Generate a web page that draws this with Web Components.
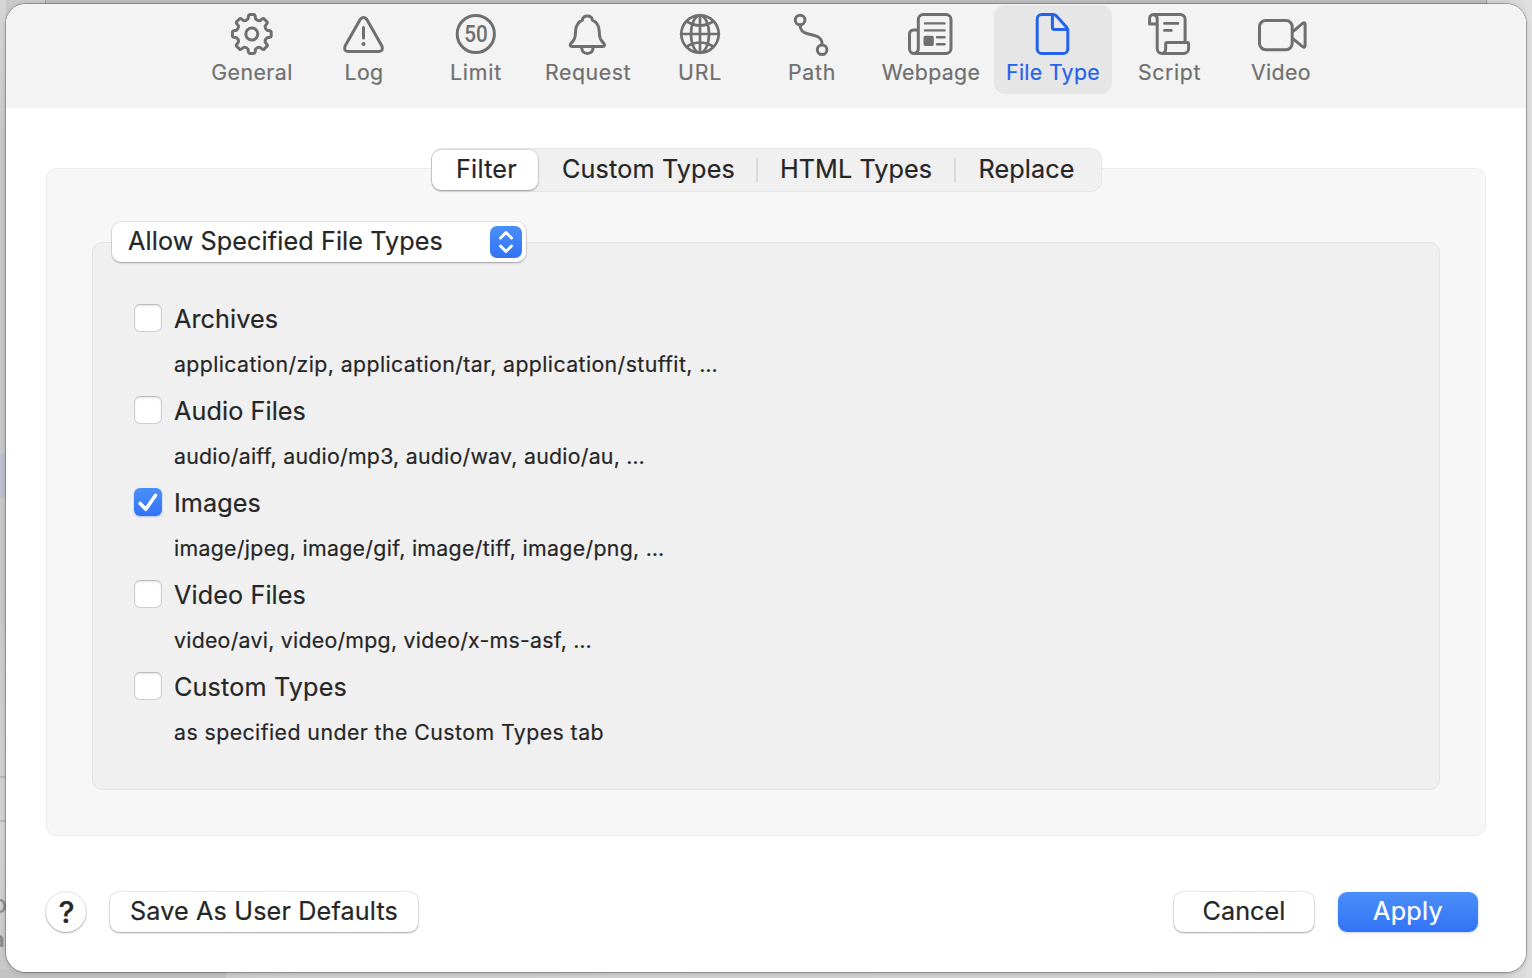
<!DOCTYPE html>
<html lang="en">
<head>
<meta charset="utf-8">
<title>File Type Settings</title>
<style>
html,body{margin:0;height:100%;overflow:hidden}
body{font-family:Inter,"Liberation Sans",sans-serif;color:#262626;font-size:25.2px;line-height:30px;-webkit-text-stroke:.2px}
</style>
</head>
<body>
<settings-window></settings-window>
<script>
const define = (name, html, setup) => {
  const tpl = document.createElement('template');
  tpl.innerHTML = html;
  customElements.define(name, class extends HTMLElement {
    constructor() { super(); this.attachShadow({mode: 'open'}).append(tpl.content.cloneNode(true)); }
    connectedCallback() { if (setup) setup.call(this, this.shadowRoot); }
  });
};

// Label whose tracking is adjusted so that it occupies a given width.
define('fit-label', `<style>:host{display:inline-block;white-space:pre}</style><span><slot></slot></span>`, function (root) {
  const span = root.querySelector('span');
  const target = parseFloat(this.getAttribute('width'));
  const n = [...this.textContent].length;
  const natural = span.getBoundingClientRect().width;
  span.style.letterSpacing = ((target - natural) / n).toFixed(4) + 'px';
  this.style.width = target + 'px';
});

const gear = (() => {
  const p = (r, a) => (28.8 + r * Math.sin(a * Math.PI / 180)).toFixed(2) + ' ' + (24 - r * Math.cos(a * Math.PI / 180)).toFixed(2);
  let d = '';
  for (let a = 0; a < 360; a += 45)
    d += (a ? 'L' : 'M') + p(15.7, a - 13.5) + 'L' + p(18.3, a - 10.5) + 'Q' + p(19.6, a - 9) + ' ' + p(19.5, a - 5.5) + 'L' + p(19.5, a + 5.5) + 'Q' + p(19.6, a + 9) + ' ' + p(18.3, a + 10.5) + 'L' + p(15.7, a + 13.5) + 'Q' + p(14, a + 22.5) + ' ' + p(15.7, a + 31.5);
  return `<path d="${d}Z"/><circle cx="28.8" cy="24" r="6"/>`;
})();

const icons = {
  gear,
  warning: '<path d="M25.3 9.2Q28.5 5.6 31.7 9.2L46.9 36Q48.8 41.4 43.8 41.5H13.2Q8.2 41.4 10.1 36Z"/><path d="M28.5 17.5V28"/><circle cx="28.5" cy="34" r="2.1" class="fill"/>',
  limit: '<circle cx="28.8" cy="24" r="18.6"/><text x="17.2" y="32.2" textLength="23.4" lengthAdjust="spacingAndGlyphs">50</text>',
  bell: '<path d="M28.4 6C25.5 6 23.6 7.8 23.4 10.2C18.8 12.3 16.8 16 16.6 21C16.4 28.5 15.3 30 12 33.4C10.6 35 11.2 36.4 13 36.4H43.8C45.6 36.4 46.2 35 44.8 33.4C41.5 30 40.4 28.5 40.2 21C40 16 38 12.3 33.4 10.2C33.2 7.8 31.3 6 28.4 6Z"/><path d="M22.6 37.5C22.9 41.2 25 43.4 28.4 43.4S33.9 41.2 34.2 37.5"/>',
  globe: '<g stroke-width="2.7"><circle cx="29" cy="24" r="18.7"/><ellipse cx="29" cy="24" rx="9" ry="18.7"/><path d="M29 5V43M10 24H48M15.8 11.5Q29 19.5 42.2 11.5M15.8 36.5Q29 28.5 42.2 36.5"/></g>',
  path: '<circle cx="17.1" cy="10" r="4.8"/><circle cx="39.1" cy="39.8" r="4.8"/><path d="M17.1 15.5C17.4 20.6 19.5 22.6 24.6 23.8L31.5 25.5C36.7 26.9 39 29 39.1 34.3"/>',
  news: '<path d="M16.3 38.6V9.5A5 5 0 0 1 21.3 4.5H44A5 5 0 0 1 49 9.5V38.5A5 5 0 0 1 44 43.5H12.3A4.8 4.8 0 0 1 7.5 38.7V24A4 4 0 0 1 11.5 20H16M16.3 38.6Q16.2 42.8 12.3 43.5"/><path stroke-width="2.4" d="M23 13.4H42.5M23 20.4H42.5M35 27.2H42.5M35 34.2H42.5"/><rect class="fill" x="21.5" y="25.8" width="10.3" height="10.3" rx="2"/>',
  file: '<path d="M16.8 4.5H28.4Q30 4.5 31 5.6L41.8 17.4Q42.8 18.6 42.8 20.2V38.9A4.6 4.6 0 0 1 38.2 43.5H16.8A4.6 4.6 0 0 1 12.2 38.9V9.1A4.6 4.6 0 0 1 16.8 4.5ZM27.4 5V17.3Q27.4 19.4 29.5 19.4H42"/>',
  script: '<path d="M16.2 14H8.6V8.5A4 4 0 0 1 12.6 4.5H39.5A4.6 4.6 0 0 1 44.1 9.1V32.5M12.6 4.5Q16.2 5 16.2 9V38.8A4.7 4.7 0 0 0 20.9 43.5H42.6A5 5 0 0 0 47.6 38.5V34Q47.6 32.6 46.2 32.6H26.2Q24.7 32.6 24.7 34V38.8Q24.6 43 20.9 43.5"/><path stroke-width="2.6" d="M23.4 13.4H37M23.4 20.4H30.4"/>',
  video: '<rect x="6.5" y="10.5" width="32.7" height="29.2" rx="6.2"/><path d="M39.5 21.8L49.6 13.4Q52 11.8 52.1 14.4V35.6Q52 38.2 49.6 36.6L39.5 28.4"/>'
};

define('tool-item', `<style>
:host{display:flex;flex-direction:column;align-items:center;box-sizing:border-box;width:110px;height:89px;padding-top:5px;border-radius:11px;color:#6f6f6f;font-size:21.3px;line-height:28px}
:host([wide]){width:124px}
:host([selected]){width:118px;background:#e6e6e6;color:#2462ea}
svg{display:block;width:56px;height:48px;fill:none;stroke:currentColor;stroke-width:3;stroke-linecap:round;stroke-linejoin:round;flex:none}
.fill{fill:currentColor;stroke:none}
text{font:500 23px Roboto,sans-serif;fill:currentColor;stroke:none}
.label{display:block;height:28px;padding-left:var(--nudge,2px)}
</style><svg viewBox="0 0 56 48"></svg><span class="label"><slot></slot></span>`, function (root) {
  root.querySelector('svg').innerHTML = icons[this.getAttribute('icon')];
});

define('tool-bar', `<style>:host{display:flex;justify-content:center;gap:2px;height:103px;padding-top:1px;background:#f3f3f3;box-sizing:content-box}</style><slot></slot>`);

define('segment-item', `<style>
:host{display:flex;justify-content:center;box-sizing:border-box;height:40px;padding-top:4px;border-radius:9px}
:host([active]){background:#fff;box-shadow:0 0 0 1px rgba(0,0,0,.08),0 1px 2px rgba(0,0,0,.3)}
</style><slot></slot>`, function () { this.style.width = this.getAttribute('size') + 'px'; });

define('segment-bar', `<style>
:host{display:flex;align-items:center;box-sizing:border-box;width:671px;height:44px;border:1px solid #e6e6e6;border-radius:11px;background:#f0f0f0}
::slotted(i){width:2px;height:24px;background:#dadada}
</style><slot></slot>`);

define('popup-button', `<style>
:host{display:flex;justify-content:space-between;box-sizing:border-box;width:414px;height:40px;padding:4px 4px 4px 16px;border-radius:9px;background:#fff;box-shadow:0 0 0 1px rgba(0,0,0,.06),0 1px 2px rgba(0,0,0,.3)}
svg{width:32px;height:32px;border-radius:7px;background:linear-gradient(#4a8ff9,#3273f6);fill:none;stroke:#fff;stroke-width:3;stroke-linecap:round;stroke-linejoin:round}
</style><slot></slot><svg viewBox="0 0 32 32"><path d="M10.5 12L16 6.5L21.5 12M10.5 20L16 25.5L21.5 20"/></svg>`);

define('check-row', `<style>
:host{display:grid;grid-template-columns:28px auto;column-gap:12px;height:92px;align-content:start}
.box{width:28px;height:28px;box-sizing:border-box;border:1px solid #cecece;border-top-color:#bcbcbc;border-radius:6px;background:#fff;box-shadow:inset 0 1px 2px rgba(0,0,0,.12)}
svg{display:none;width:28px;height:28px;fill:none;stroke:#fff;stroke-width:3.6;stroke-linecap:round;stroke-linejoin:round}
:host([checked]) .box{border:0;background:linear-gradient(#4a8ff9,#3273f6);box-shadow:0 1px 2px rgba(50,115,246,.35)}
:host([checked]) svg{display:block}
.title{height:45px}
.note{grid-column:2;font-size:21.3px}
</style><div class="box"><svg viewBox="0 0 28 28"><path d="M6.2 15.4L11.8 21.3L21.5 7.3"/></svg></div><div class="title"><slot></slot></div><div class="note"><slot name="note"></slot></div>`);

define('group-box', `<style>
:host{display:block;box-sizing:border-box;border-radius:10px;border:1px solid #ececec;background:#f7f7f7}
:host([inner]){border-color:#e3e3e3;background:#f0f0f0}
</style><slot></slot>`);

define('push-button', `<style>
:host{display:flex;justify-content:center;box-sizing:border-box;height:40px;padding-top:4px;border-radius:9px;background:#fff;box-shadow:0 0 0 1px rgba(0,0,0,.08),0 1px 2px rgba(0,0,0,.3)}
:host([primary]){color:#fff;background:linear-gradient(#4a8ff9,#3273f6);box-shadow:0 1px 3px rgba(50,115,246,.3)}
:host([round]){border-radius:50%;font-weight:500;font-size:30.5px;padding:5px 0 0 1px}
</style><slot></slot>`, function () { this.style.width = this.getAttribute('size') + 'px'; });

// Dimmed strip of the parent window that shows round the sheet.
define('parent-window', `<style>
:host{position:absolute;inset:0;overflow:hidden;background:linear-gradient(90deg,#c8c8c8,#d0d0d0 20%,#d3d3d3 98%,#dfdfdf)}
div,span{position:absolute}
.top{left:45px;width:1440px;top:0;height:4px;background:#bcbcbc;border:solid #999;border-width:0 1px}
.left{left:0;top:0;width:6px;height:978px;background:linear-gradient(#d6d6d6,#c8c8c8 15%,#c8c8c8 60%,#d4d4d4 85%,#c8c8c8)}
.right{right:0;top:0;width:6px;height:978px;background:#e0e0e0}
.row{left:0;width:6px;top:454px;height:44px;background:#bcc0cd}
.line{left:0;width:6px;height:2px;background:#b8b8b8}
.foot{left:0;width:226px;top:970px;height:8px;background:#c2c2c2}
span{color:#8a8a8a;font-size:25px;line-height:30px}
</style><div class="left"></div><div class="right"></div><div class="top"></div><div class="row"></div><div class="line" style="top:776px"></div><div class="line" style="top:820px"></div><div class="foot"></div><span style="left:-8px;top:889px">o</span><span style="left:-8px;top:924px;font-weight:600;font-size:22px">a</span>`);

define('sheet-panel', `<style>
:host{position:relative;display:flex;flex-direction:column;width:1520px;height:968px;border-radius:20px;background:#fff;overflow:hidden}
</style><slot></slot>`);

define('settings-window', `<style>
:host{display:block;position:relative;box-sizing:border-box;width:1532px;height:978px;padding:4px 6px 6px;overflow:hidden}
.shade{position:relative;width:1520px;height:968px;border-radius:20px;box-shadow:0 0 0 1px rgba(0,0,0,.22),0 1px 5px rgba(0,0,0,.22)}
.outer{width:1440px;height:668px;margin:60px 40px 0}
segment-bar{margin:-21px 0 0 384px}
.inner{width:1348px;height:548px;margin:50px 45px 0}
popup-button{margin:-21px 0 0 19px}
.rows{padding:42px 0 0 41px}
footer{display:flex;padding:56px 48px 0 40px}
.save{margin-left:24px}
.cancel{margin-left:auto;margin-right:24px}
.flush{--nudge:0px}
</style>
<parent-window></parent-window>
<div class="shade"><sheet-panel>
<tool-bar>
<tool-item icon="gear"><fit-label width="81.5">General</fit-label></tool-item>
<tool-item icon="warning"><fit-label width="39">Log</fit-label></tool-item>
<tool-item icon="limit"><fit-label width="52">Limit</fit-label></tool-item>
<tool-item icon="bell"><fit-label width="86">Request</fit-label></tool-item>
<tool-item icon="globe"><fit-label width="44">URL</fit-label></tool-item>
<tool-item icon="path"><fit-label width="48">Path</fit-label></tool-item>
<tool-item icon="news" wide><fit-label width="98.5">Webpage</fit-label></tool-item>
<tool-item icon="file" selected class="flush"><fit-label width="94">File Type</fit-label></tool-item>
<tool-item icon="script" style="--nudge:1px"><fit-label width="63">Script</fit-label></tool-item>
<tool-item icon="video" class="flush"><fit-label width="60">Video</fit-label></tool-item>
</tool-bar>
<group-box class="outer">
<segment-bar>
<segment-item active size="106" style="padding-left:3px"><fit-label width="61">Filter</fit-label></segment-item>
<segment-item size="218" style="padding-left:3px"><fit-label width="173">Custom Types</fit-label></segment-item><i></i>
<segment-item size="196"><fit-label width="152">HTML Types</fit-label></segment-item><i></i>
<segment-item size="141"><fit-label width="96">Replace</fit-label></segment-item>
</segment-bar>
<group-box inner class="inner">
<popup-button><fit-label width="315">Allow Specified File Types</fit-label></popup-button>
<div class="rows">
<check-row><fit-label width="104">Archives</fit-label><fit-label slot="note" width="544">application/zip, application/tar, application/stuffit, …</fit-label></check-row>
<check-row><fit-label width="132">Audio Files</fit-label><fit-label slot="note" width="471">audio/aiff, audio/mp3, audio/wav, audio/au, …</fit-label></check-row>
<check-row checked><fit-label width="87">Images</fit-label><fit-label slot="note" width="490.5">image/jpeg, image/gif, image/tiff, image/png, …</fit-label></check-row>
<check-row><fit-label width="132">Video Files</fit-label><fit-label slot="note" width="418">video/avi, video/mpg, video/x-ms-asf, …</fit-label></check-row>
<check-row><fit-label width="173">Custom Types</fit-label><fit-label slot="note" width="430">as specified under the Custom Types tab</fit-label></check-row>
</div>
</group-box>
</group-box>
<footer>
<push-button round size="40">?</push-button>
<push-button class="save" size="308"><fit-label width="268">Save As User Defaults</fit-label></push-button>
<push-button class="cancel" size="140"><fit-label width="83">Cancel</fit-label></push-button>
<push-button primary size="140"><fit-label width="70">Apply</fit-label></push-button>
</footer>
</sheet-panel></div>`);
</script>
</body>
</html>
